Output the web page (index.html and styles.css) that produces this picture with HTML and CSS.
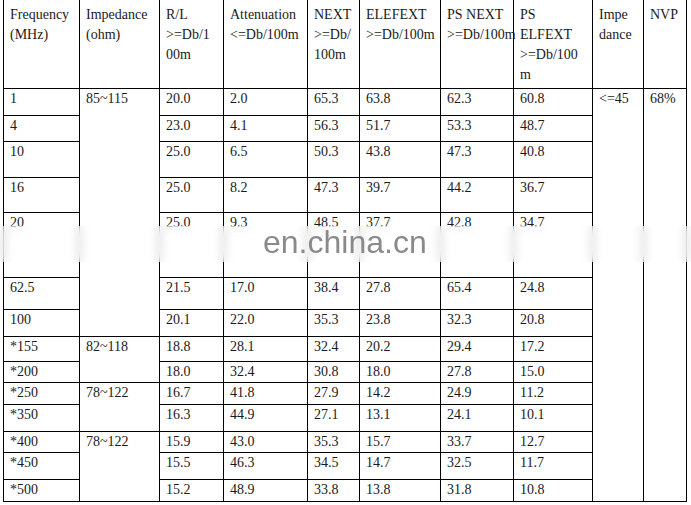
FILE: index.html
```html
<!DOCTYPE html>
<html>
<head>
<meta charset="utf-8">
<link rel="stylesheet" href="styles.css">
</head>
<body>
<div class="wrap">
<table class="spec">
<colgroup>
<col class="c1"><col class="c2"><col class="c3"><col class="c4"><col class="c5"><col class="c6"><col class="c7"><col class="c8"><col class="c9"><col class="c10">
</colgroup>
<tr class="h88 head">
<td>Frequency<br>(MHz)</td>
<td>Impedance<br>(ohm)</td>
<td>R/L<br>&gt;=Db/1<br>00m</td>
<td>Attenuation<br>&lt;=Db/100m</td>
<td>NEXT<br>&gt;=Db/<br>100m</td>
<td>ELEFEXT<br>&gt;=Db/100m</td>
<td>PS NEXT<br>&gt;=Db/100m</td>
<td>PS<br>ELFEXT<br>&gt;=Db/100<br>m</td>
<td>Impe<br>dance</td>
<td>NVP</td>
</tr>
<tr class="h27"><td>1</td><td rowspan="7">85~115</td><td>20.0</td><td>2.0</td><td>65.3</td><td>63.8</td><td>62.3</td><td>60.8</td><td rowspan="14">&lt;=45</td><td rowspan="14">68%</td></tr>
<tr class="h26"><td>4</td><td>23.0</td><td>4.1</td><td>56.3</td><td>51.7</td><td>53.3</td><td>48.7</td></tr>
<tr class="h36"><td>10</td><td>25.0</td><td>6.5</td><td>50.3</td><td>43.8</td><td>47.3</td><td>40.8</td></tr>
<tr class="h35"><td>16</td><td>25.0</td><td>8.2</td><td>47.3</td><td>39.7</td><td>44.2</td><td>36.7</td></tr>
<tr class="h65"><td>20</td><td>25.0</td><td>9.3</td><td>48.5</td><td>37.7</td><td>42.8</td><td>34.7</td></tr>
<tr class="h32"><td>62.5</td><td>21.5</td><td>17.0</td><td>38.4</td><td>27.8</td><td>65.4</td><td>24.8</td></tr>
<tr class="h27"><td>100</td><td>20.1</td><td>22.0</td><td>35.3</td><td>23.8</td><td>32.3</td><td>20.8</td></tr>
<tr class="h25"><td>*155</td><td rowspan="2">82~118</td><td>18.8</td><td>28.1</td><td>32.4</td><td>20.2</td><td>29.4</td><td>17.2</td></tr>
<tr class="h21"><td>*200</td><td>18.0</td><td>32.4</td><td>30.8</td><td>18.0</td><td>27.8</td><td>15.0</td></tr>
<tr class="h22"><td>*250</td><td rowspan="2">78~122</td><td>16.7</td><td>41.8</td><td>27.9</td><td>14.2</td><td>24.9</td><td>11.2</td></tr>
<tr class="h27"><td>*350</td><td>16.3</td><td>44.9</td><td>27.1</td><td>13.1</td><td>24.1</td><td>10.1</td></tr>
<tr class="h21"><td>*400</td><td rowspan="3">78~122</td><td>15.9</td><td>43.0</td><td>35.3</td><td>15.7</td><td>33.7</td><td>12.7</td></tr>
<tr class="h27"><td>*450</td><td>15.5</td><td>46.3</td><td>34.5</td><td>14.7</td><td>32.5</td><td>11.7</td></tr>
<tr class="h22"><td>*500</td><td>15.2</td><td>48.9</td><td>33.8</td><td>13.8</td><td>31.8</td><td>10.8</td></tr>
</table>
<div class="band"></div>
<div class="mark">en.china.cn</div>
</div>
</body>
</html>
```
FILE: styles.css
```css
html, body {
  margin: 0;
  padding: 0;
  background: #fff;
}
.wrap {
  position: relative;
  width: 691px;
  height: 505px;
  overflow: hidden;
}
.spec {
  border-collapse: collapse;
  table-layout: fixed;
  width: 683px;
  margin: -1px 0 0 3px;
  font-family: "Liberation Serif", "Times New Roman", serif;
  font-size: 14px;
  line-height: 20px;
  color: #1a1a1a;
}
.spec td {
  border: 1px solid #000;
  padding: 0 0 0 6px;
  vertical-align: top;
  white-space: nowrap;
  overflow: visible;
}
.head td {
  padding-top: 5px;
}
.c1 { width: 76px; }
.c2 { width: 80px; }
.c3 { width: 64px; }
.c4 { width: 84px; }
.c5 { width: 52px; }
.c6 { width: 81px; }
.c7 { width: 73px; }
.c8 { width: 79px; }
.c9 { width: 51px; }
.c10 { width: 43px; }
.h88 { height: 89px; }
.h21 { height: 21px; }
.h22 { height: 22px; }
.h25 { height: 25px; }
.h26 { height: 26px; }
.h27 { height: 27px; }
.h32 { height: 32px; }
.h35 { height: 35px; }
.h36 { height: 36px; }
.h65 { height: 65px; }
.band {
  position: absolute;
  left: 0;
  right: 0;
  top: 226px;
  height: 36px;
  background: rgba(255, 255, 255, 0.4);
  backdrop-filter: blur(4px);
}
.mark {
  position: absolute;
  left: 263px;
  top: 225px;
  font-family: "Liberation Sans", Arial, sans-serif;
  font-size: 32px;
  line-height: 34px;
  color: #8a8a8a;
}
```
